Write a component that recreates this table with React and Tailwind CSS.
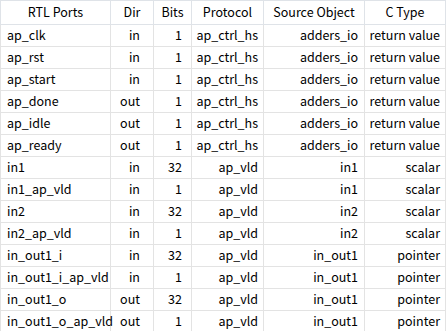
import React from 'react';

const cols = [
    { key: 'port', label: 'RTL Ports', w: 'w-[110px]', align: 'text-left pl-[6px]' },
    { key: 'dir', label: 'Dir', w: 'w-[43px]', align: 'text-right pr-[13px]' },
    { key: 'bits', label: 'Bits', w: 'w-[38px]', align: 'text-right pr-[9px]' },
    { key: 'proto', label: 'Protocol', w: 'w-[72px]', align: 'text-right pr-[5px]' },
    { key: 'src', label: 'Source Object', w: 'w-[101px]', align: 'text-right pr-[6px]' },
    { key: 'ctype', label: 'C Type', w: 'w-[81px]', align: 'text-right pr-[5px]' },
];

const rows = [
    ['ap_clk', 'in', '1', 'ap_ctrl_hs', 'adders_io', 'return value'],
    ['ap_rst', 'in', '1', 'ap_ctrl_hs', 'adders_io', 'return value'],
    ['ap_start', 'in', '1', 'ap_ctrl_hs', 'adders_io', 'return value'],
    ['ap_done', 'out', '1', 'ap_ctrl_hs', 'adders_io', 'return value'],
    ['ap_idle', 'out', '1', 'ap_ctrl_hs', 'adders_io', 'return value'],
    ['ap_ready', 'out', '1', 'ap_ctrl_hs', 'adders_io', 'return value'],
    ['in1', 'in', '32', 'ap_vld', 'in1', 'scalar'],
    ['in1_ap_vld', 'in', '1', 'ap_vld', 'in1', 'scalar'],
    ['in2', 'in', '32', 'ap_vld', 'in2', 'scalar'],
    ['in2_ap_vld', 'in', '1', 'ap_vld', 'in2', 'scalar'],
    ['in_out1_i', 'in', '32', 'ap_vld', 'in_out1', 'pointer'],
    ['in_out1_i_ap_vld', 'in', '1', 'ap_vld', 'in_out1', 'pointer'],
    ['in_out1_o', 'out', '32', 'ap_vld', 'in_out1', 'pointer'],
    ['in_out1_o_ap_vld', 'out', '1', 'ap_vld', 'in_out1', 'pointer'],
];

export default function App() {
    return (
        <div className="w-[447px] h-[331px] overflow-hidden bg-white font-['Noto_Sans_CJK_SC',sans-serif] text-[12.5px] text-black">
            <table className="table-fixed border-collapse w-[445px]">
                <thead>
                    <tr className="h-[24px]">
                        {cols.map((c) => (
                            <th key={c.key} className={`${c.w} border border-[#dfe3e8] font-normal text-center leading-none`}>
                                {c.label}
                            </th>
                        ))}
                    </tr>
                </thead>
                <tbody>
                    {rows.map((r, i) => (
                        <tr key={i} className="h-[22px]">
                            {r.map((v, j) => (
                                <td key={j} className={`${cols[j].align} border border-[#e3e3e3] whitespace-nowrap leading-none`}>
                                    {v}
                                </td>
                            ))}
                        </tr>
                    ))}
                </tbody>
            </table>
        </div>
    );
}
